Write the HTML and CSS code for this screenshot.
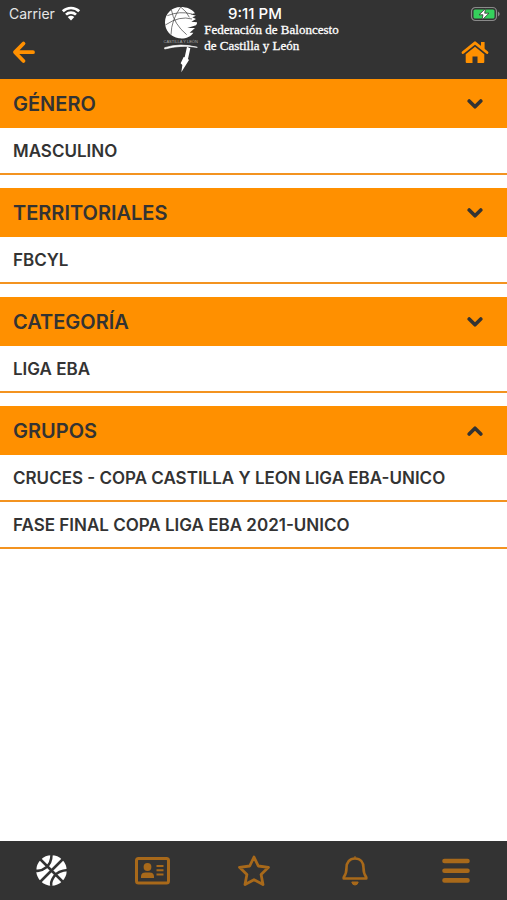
FILE: index.html
```html
<!DOCTYPE html>
<html lang="es">
<head>
    <meta charset="UTF-8">
    <meta name="viewport" content="width=device-width, initial-scale=1.0">
    <title>Federación de Baloncesto de Castilla y León</title>
    <link rel="stylesheet" href="styles.css">
</head>
<body>
    <header class="header">
        <div class="status">
            <div class="status-left">
                <span>Carrier</span>
                <svg class="wifi" viewBox="0 0 20 15" aria-hidden="true">
                    <path d="M1.800 5.300a11.800 11.800 0 0 1 16.400 0M5 8.600a7.200 7.200 0 0 1 10 0" fill="none" stroke="#fff" stroke-width="2.7"/>
                    <path d="M6.700 11.100a5 5 0 0 1 6.600 0L10 14.500z" fill="#fff"/>
                </svg>
            </div>
            <span class="time">9:11 PM</span>
            <svg class="battery" viewBox="0 0 32 16" aria-hidden="true">
                <rect x="2.5" y="1.5" width="25" height="13" rx="4" fill="none" stroke="#8a8a8a" stroke-width="1.2"/>
                <path d="M29 5.500q3.500 2.500 0 5z" fill="#8a8a8a"/>
                <rect x="4.500" y="3.500" width="21" height="9" rx="1.500" fill="#35d15c"/>
                <path d="M16.500 2.500L10 8.800h4L13 14l7-6.800h-4.300z" fill="#fff" stroke="#333" stroke-width=".8"/>
            </svg>
        </div>

        <button class="icon-btn" aria-label="Volver">
            <svg class="back" viewBox="0 0 24 24">
                <path d="M11.500 3.500L3 12.200l8.500 8.800M3.500 12.200h17.500" fill="none" stroke="#ff9000" stroke-width="3.800" stroke-linecap="round" stroke-linejoin="round"/>
            </svg>
        </button>

        <div class="logo">
            <svg class="emblem" viewBox="22 18 111 201" aria-hidden="true">
                <path d="M121 40C112 27 96 21 78 21C51 21 31 41 31 67C31 91 47 111 73 115C92 117 108 110 116 98L105 98L121 84L98 84L124 76Q128 72 127 67L110 65L124 57L113 52L124 47L108 43z" fill="#fff"/>
                <path d="M38 47Q75 32 112 42M32 75Q75 46 112 57M50 29Q58 73 96 104M78 21Q50 60 49 104M78 21Q98 36 104 52" fill="none" stroke="#333" stroke-width="2"/>
                <text class="emblem-text" x="78" y="130" text-anchor="middle">CASTILLA Y LEÓN</text>
                <path d="M30 143Q76 128 128 142Q78 134 30 147z" fill="#fff" stroke="#fff" stroke-width="2"/>
                <path d="M97 140L107 145L100 177L103 180L80 217L83 195L78 190L87 171L90 172z" fill="#fff"/>
            </svg>
            <div class="logo-text">Federación de Baloncesto<br>de Castilla y León</div>
        </div>

        <button class="icon-btn" aria-label="Inicio">
            <svg class="home" viewBox="0 0 28 24">
                <path d="M2 12.500L14 2.800l12 9.700" fill="none" stroke="#ff9000" stroke-width="2.800" stroke-linecap="round" stroke-linejoin="round"/>
                <path d="M20 2h3.600v8L20 7zM14 6.700l9.300 7.600V22a1 1 0 0 1-1 1h-5.800v-6.500h-5V23H5.700a1 1 0 0 1-1-1v-7.700z" fill="#ff9000"/>
            </svg>
        </button>
    </header>

    <main class="content">
        <section class="group">
            <button class="group-title" aria-expanded="false">
                <span>GÉNERO</span>
                <svg class="chevron" viewBox="0 0 16 12"><path d="M2.200 3L8 8.800 13.800 3"/></svg>
            </button>
            <a class="row" href="#">MASCULINO</a>
        </section>
        <section class="group">
            <button class="group-title" aria-expanded="false">
                <span>TERRITORIALES</span>
                <svg class="chevron" viewBox="0 0 16 12"><path d="M2.200 3L8 8.800 13.800 3"/></svg>
            </button>
            <a class="row" href="#">FBCYL</a>
        </section>
        <section class="group">
            <button class="group-title" aria-expanded="false">
                <span>CATEGORÍA</span>
                <svg class="chevron" viewBox="0 0 16 12"><path d="M2.200 3L8 8.800 13.800 3"/></svg>
            </button>
            <a class="row" href="#">LIGA EBA</a>
        </section>
        <section class="group">
            <button class="group-title" aria-expanded="true">
                <span>GRUPOS</span>
                <svg class="chevron" viewBox="0 0 16 12"><path d="M2.200 9L8 3.200 13.800 9"/></svg>
            </button>
            <a class="row" href="#">CRUCES - COPA CASTILLA Y LEON LIGA EBA-UNICO</a>
            <a class="row" href="#">FASE FINAL COPA LIGA EBA 2021-UNICO</a>
        </section>
    </main>

    <nav class="tabs">
        <a class="tab active" href="#" aria-label="Competiciones">
            <svg viewBox="0 0 36 36">
                <circle cx="18.500" cy="17.500" r="15.200" fill="currentColor"/>
                <path d="M7 6l23 23M30 6L7 29M18.500 2Q18.500 10 13 14.500T2 17.500M35 17Q25 17.500 21 23.500T18.500 33" fill="none" stroke="#333" stroke-width="2.500"/>
            </svg>
        </a>
        <a class="tab" href="#" aria-label="Carnet">
            <svg viewBox="0 0 36 36">
                <rect x="2.500" y="5.500" width="32" height="24.500" rx="2" fill="none" stroke="currentColor" stroke-width="3"/>
                <circle cx="13.500" cy="14" r="3.900" fill="currentColor"/>
                <path d="M7 25v-1.500q0-4 4.500-4h4q4.500 0 4.500 4v1.500z" fill="currentColor"/>
                <path d="M22.500 13h7M22.500 17.200h7M22.500 21.400h7" stroke="currentColor" stroke-width="2"/>
            </svg>
        </a>
        <a class="tab" href="#" aria-label="Favoritos">
            <svg viewBox="0 0 36 36">
                <path d="M18 4l4.300 9 10.200 1.300-7.400 7.100 1.900 10.200-9-4.900-9 4.900 1.900-10.200-7.400-7.100 10.200-1.300z" fill="none" stroke="currentColor" stroke-width="2.800" stroke-linejoin="round"/>
            </svg>
        </a>
        <a class="tab" href="#" aria-label="Avisos">
            <svg viewBox="0 0 36 36">
                <path d="M18 5.500c-5.500 0-8.500 4-8.500 9.300 0 6-1.300 7.500-2.800 9.400v1.300h22.600v-1.300c-1.500-1.900-2.800-3.400-2.800-9.400 0-5.300-3-9.300-8.500-9.300z" fill="none" stroke="currentColor" stroke-width="2.600" stroke-linejoin="round"/>
                <path d="M18 3v2.500M14.800 29h6.400q-.5 3-3.200 3t-3.200-3z" fill="currentColor" stroke="currentColor"/>
            </svg>
        </a>
        <a class="tab" href="#" aria-label="Menú">
            <svg viewBox="0 0 36 36">
                <path d="M6.500 8h23M6.500 17.700h23M6.500 27.400h23" stroke="currentColor" stroke-width="4.600" stroke-linecap="round"/>
            </svg>
        </a>
    </nav>
</body>
</html>
```
FILE: styles.css
```css
* {
    box-sizing: border-box;
}

body {
    margin: 0;
    min-height: 100vh;
    display: flex;
    flex-direction: column;
    background-color: #ffffff;
    color: #333333;
    font-family: Inter, "Liberation Sans", sans-serif;
}

button {
    border: none;
    margin: 0;
    font-family: inherit;
    color: inherit;
    cursor: pointer;
}

svg {
    display: block;
}

.header {
    position: relative;
    display: grid;
    grid-template-columns: 1fr auto 1fr;
    padding: 6px 12px;
    min-height: 79px;
    background-color: #333333;
}

/* barra de estado, encima de la cabecera */
.status {
    position: absolute;
    top: 0;
    left: 0;
    right: 0;
    display: grid;
    grid-template-columns: 1fr auto 1fr;
    align-items: center;
    height: 27px;
    padding: 0 6px 0 9px;
    font-size: 14px;
    line-height: 16px;
    color: #e6e6e6;
}

.status-left {
    display: flex;
    align-items: center;
    gap: 6px;
}

.wifi {
    width: 20px;
    height: 15px;
}

.time {
    font-size: 15px;
    font-weight: 500;
    line-height: 14px;
    color: #ffffff;
}

.battery {
    justify-self: end;
    width: 32px;
    height: 16px;
}

.icon-btn {
    align-self: end;
    padding: 0;
    height: 42px;
    background: none;
}

.icon-btn:last-child {
    justify-self: end;
    padding-right: 6px;
}

.icon-btn:first-of-type {
    justify-self: start;
}

.back {
    width: 24px;
    height: 24px;
}

.home {
    width: 28px;
    height: 24px;
}

.logo {
    display: flex;
    gap: 5px;
    padding-right: 6px;
}

.emblem {
    width: 37px;
    height: 67px;
}

.emblem-text {
    font-family: "Liberation Sans", sans-serif;
    font-size: 12px;
    fill: #aaaaaa;
}

.logo-text {
    padding-top: 16px;
    font-family: "Liberation Serif", serif;
    font-size: 13px;
    line-height: 16px;
    color: #ffffff;
    -webkit-text-stroke: 0.3px #ffffff;
}

.content {
    flex: 1;
}

.group {
    margin-bottom: 13px;
}

.group-title {
    display: flex;
    justify-content: space-between;
    align-items: center;
    width: 100%;
    height: 49px;
    padding: 0 24px 0 13px;
    background-color: #ff9000;
    font-size: 20px;
    font-weight: 600;
}

.chevron {
    width: 16px;
    height: 12px;
    fill: none;
    stroke: #333333;
    stroke-width: 3.6;
    stroke-linecap: round;
    stroke-linejoin: round;
}

.row {
    display: block;
    padding: 12px 13px 11px;
    border-bottom: 2px solid #f39320;
    font-size: 17px;
    font-weight: 600;
    line-height: 22px;
    color: #333333;
    text-decoration: none;
}

.tabs {
    display: flex;
    height: 59px;
    background-color: #333333;
}

.tab {
    flex: 1;
    display: flex;
    justify-content: center;
    align-items: center;
    color: #a8691a;
}

.tab.active {
    color: #ffffff;
}

.tab svg {
    width: 36px;
    height: 36px;
}
```
